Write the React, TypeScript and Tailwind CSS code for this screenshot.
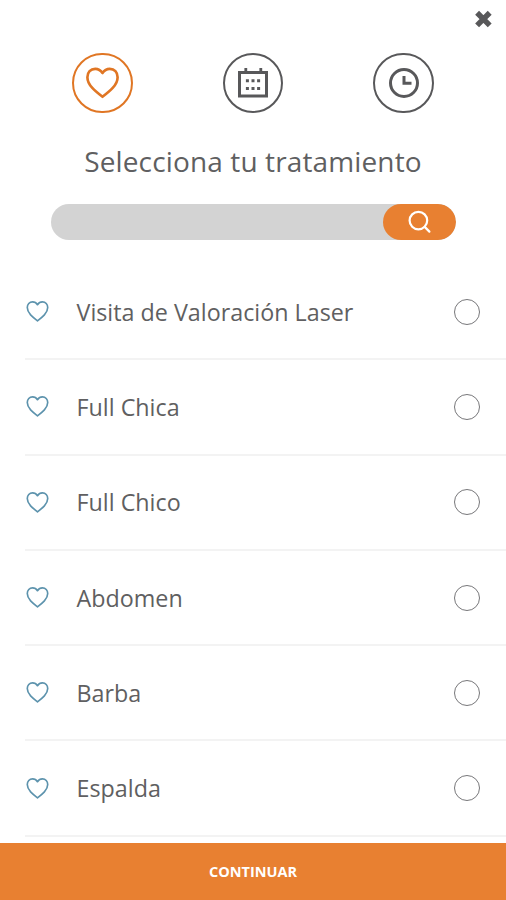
import React, { useState } from 'react';

const TREATMENTS = [
  'Visita de Valoración Laser',
  'Full Chica',
  'Full Chico',
  'Abdomen',
  'Barba',
  'Espalda',
];

const HeartIcon: React.FC<{ className?: string; strokeWidth: number }> = ({ className, strokeWidth }) => (
  <svg viewBox="0 0 36 36" fill="none" stroke="currentColor" strokeWidth={strokeWidth} strokeLinejoin="round" className={className}>
    <path d="M18 7.400C16 4.300 13.200 3 10.300 3 5.400 3 2 6.700 2 11.900c0 4.200 2 7.900 5.200 11.300 3.200 3.400 6.900 6.400 10.800 9.400 3.900-3 7.600-6 10.800-9.400C32 19.800 34 16.100 34 11.900 34 6.700 30.600 3 25.700 3 22.800 3 20 4.300 18 7.400Z" />
  </svg>
);

const CalendarIcon = () => (
  <svg viewBox="0 0 32 32" fill="none" stroke="currentColor" className="h-8 w-8">
    <rect x="2.500" y="5.500" width="27" height="23.500" strokeWidth="3" />
    <path d="M8.800 1v5M23.800 1v5" strokeWidth="2.800" />
    <path d="M8.900 13.800h3M14.500 13.800h3M20.100 13.800h3M8.900 21.400h3M14.500 21.400h3M20.100 21.400h3" strokeWidth="3" />
  </svg>
);

const ClockIcon = () => (
  <svg viewBox="0 0 32 32" fill="none" stroke="currentColor" strokeWidth="3" className="h-8 w-8">
    <circle cx="16" cy="16" r="13.500" />
    <path d="M16 9v7.300h7.500" />
  </svg>
);

const App: React.FC = () => {
  const [selected, setSelected] = useState<string | null>(null);
  const [query, setQuery] = useState('');

  const visible = TREATMENTS.filter((name) => name.toLowerCase().includes(query.toLowerCase()));

  return (
    <div className="flex h-[900px] w-full flex-col overflow-hidden bg-white font-['Open_Sans',sans-serif] text-[#58585a]">
      <div className="flex h-[53px] shrink-0 justify-end pt-[9px] pr-[13px]">
        <button type="button" aria-label="Cerrar" className="h-5 w-5">
          <svg viewBox="0 0 20 20" stroke="currentColor" strokeWidth="5.500" className="h-5 w-5">
            <path d="M4.100 3.800 16.700 16.400M16.700 3.800 4.100 16.400" />
          </svg>
        </button>
      </div>

      {/* Pasos */}
      <div className="flex h-[60px] shrink-0 justify-between px-[72px]">
        <div className="flex h-[60px] w-[61px] items-center justify-center rounded-full border-2 border-[#e07624] text-[#e07624]">
          <HeartIcon className="h-[34px] w-[35px]" strokeWidth={2.8} />
        </div>
        <div className="flex h-[60px] w-[60px] items-center justify-center rounded-full border-2">
          <CalendarIcon />
        </div>
        <div className="flex h-[60px] w-[61px] items-center justify-center rounded-full border-2">
          <ClockIcon />
        </div>
      </div>

      <h1 className="mt-[28px] h-10 shrink-0 text-center text-[28px] leading-10 tracking-[0.130px] text-[#5f5f61]">Selecciona tu tratamiento</h1>

      <div className="mt-[23px] ml-[51px] flex h-[36px] w-[405px] shrink-0 overflow-hidden rounded-full bg-[#d3d3d3]">
        <input
          type="text"
          aria-label="Buscar"
          value={query}
          onChange={(e) => setQuery(e.target.value)}
          className="min-w-0 flex-1 bg-transparent px-5 text-lg outline-none"
        />
        <button type="button" aria-label="Buscar" className="flex w-[73px] items-center justify-center rounded-full bg-[#e88031] text-white">
          <svg viewBox="0 0 24 24" fill="none" stroke="currentColor" strokeWidth="2.200" strokeLinecap="round" className="h-6 w-6">
            <circle cx="10.400" cy="10.600" r="8.800" />
            <path d="m16.700 16.900 4.700 4.700" />
          </svg>
        </button>
      </div>

      {/* Lista de tratamientos */}
      <ul className="mt-[25px] min-h-0 flex-1 overflow-hidden pl-[25px]">
        {visible.map((name) => (
          <li key={name} className="h-[95.300px] border-b-2 border-[#f3f3f3]">
            <button type="button" onClick={() => setSelected(name)} className="flex h-full w-full items-center pr-[26px] text-left">
              <HeartIcon className="ml-[0.500px] h-[23px] w-[23px] text-[#5d93ad]" strokeWidth={2.6} />
              <span className="ml-[28px] flex-1 text-[23.300px] leading-8 text-[#5f5f61]">{name}</span>
              <span className="flex h-[26px] w-[26px] items-center justify-center rounded-full border border-[#77777a]">
                {selected === name && <span className="h-3.5 w-3.5 rounded-full bg-[#e88031]" />}
              </span>
            </button>
          </li>
        ))}
      </ul>

      <button type="button" className="h-[57px] w-full shrink-0 bg-[#e88031] text-[14.500px] font-bold text-white">
        CONTINUAR
      </button>
    </div>
  );
};

export default App;
